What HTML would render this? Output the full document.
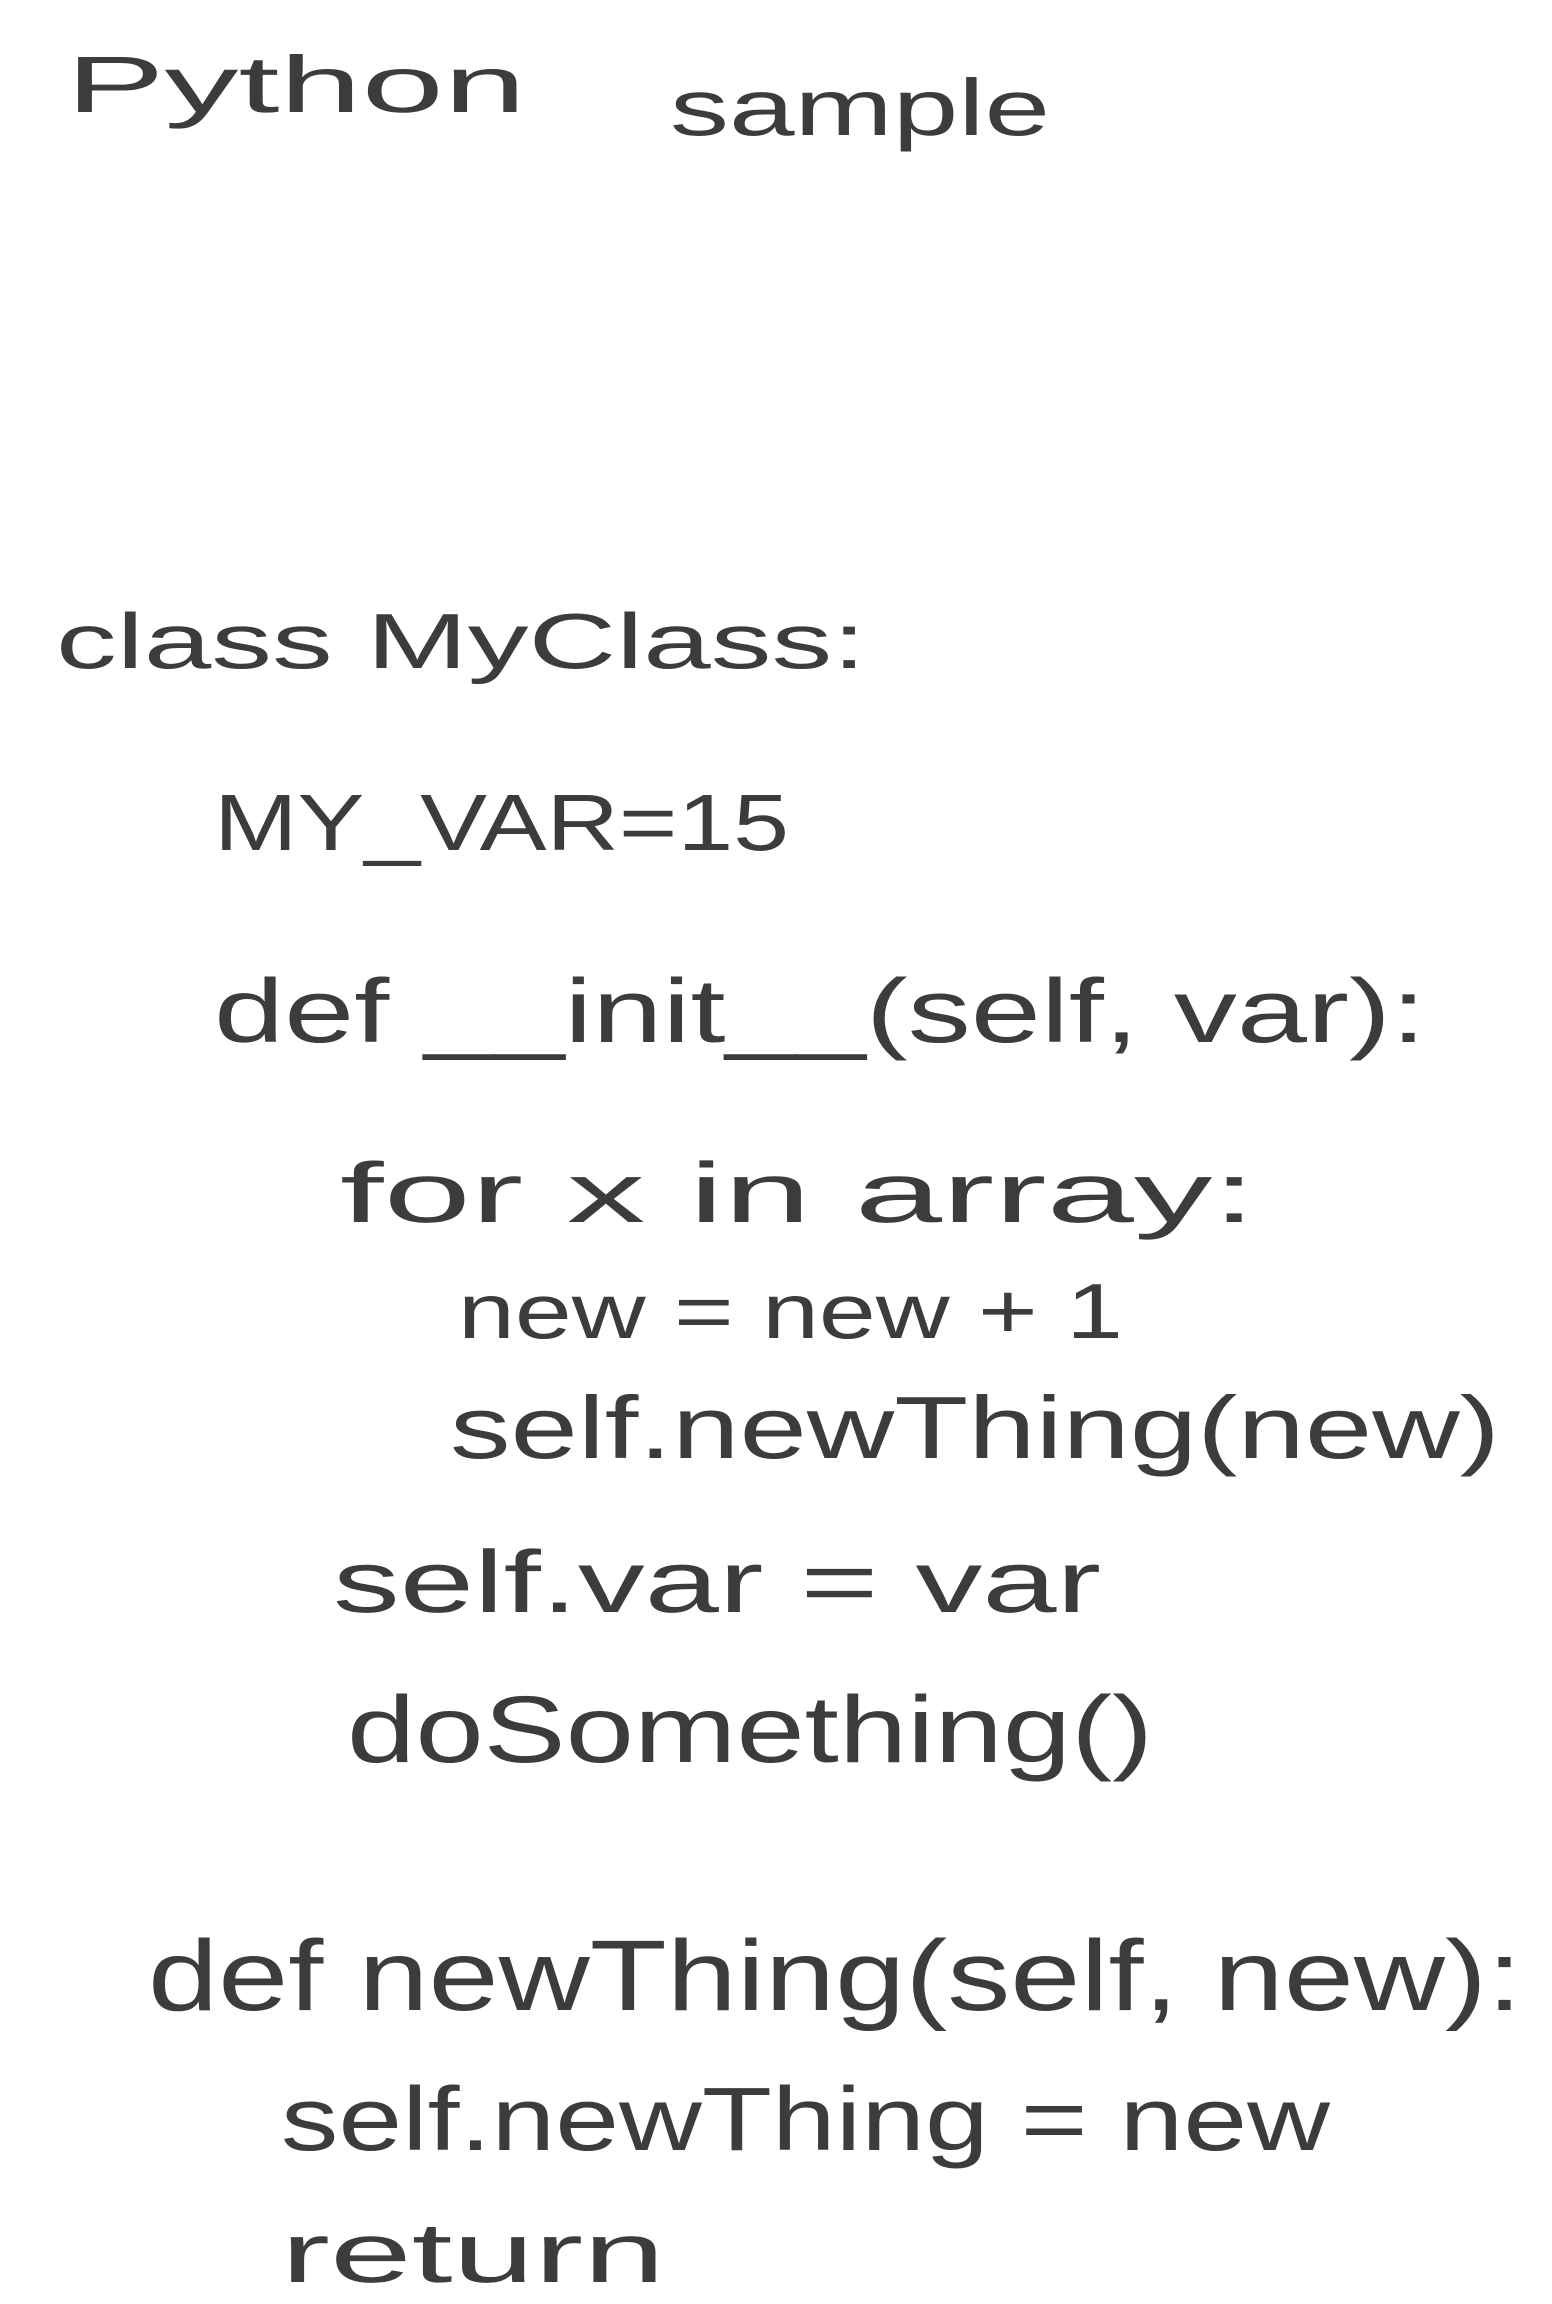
<!DOCTYPE html>
<html><head><meta charset="utf-8"><style>
html,body{margin:0;padding:0;background:#fff;}
svg{display:block;}
text{font-family:"Liberation Sans",sans-serif;fill:#3c3c3c;}
</style></head><body>
<svg width="1552" height="2304" viewBox="0 0 1552 2304" xmlns="http://www.w3.org/2000/svg">
<text x="66" y="112" font-size="80" textLength="460" lengthAdjust="spacingAndGlyphs">Python</text>
<text x="670" y="135" font-size="80" textLength="380" lengthAdjust="spacingAndGlyphs">sample</text>
<text x="56" y="668" font-size="78" textLength="810" lengthAdjust="spacingAndGlyphs">class  MyClass:</text>
<text x="214" y="850" font-size="80" textLength="575" lengthAdjust="spacingAndGlyphs">MY_VAR=15</text>
<text x="214" y="1042" font-size="90" textLength="1212" lengthAdjust="spacingAndGlyphs">def __init__(self, var):</text>
<text x="340" y="1222" font-size="85" textLength="916" lengthAdjust="spacingAndGlyphs">for x in array:</text>
<text x="458" y="1338" font-size="78" textLength="665" lengthAdjust="spacingAndGlyphs">new = new + 1</text>
<text x="450" y="1458" font-size="88" textLength="1050" lengthAdjust="spacingAndGlyphs">self.newThing(new)</text>
<text x="333" y="1612" font-size="88" textLength="768" lengthAdjust="spacingAndGlyphs">self.var = var</text>
<text x="347" y="1762" font-size="95" textLength="806" lengthAdjust="spacingAndGlyphs">doSomething()</text>
<text x="148" y="2010" font-size="100" textLength="1374" lengthAdjust="spacingAndGlyphs">def newThing(self, new):</text>
<text x="281" y="2150" font-size="90" textLength="1049" lengthAdjust="spacingAndGlyphs">self.newThing = new</text>
<text x="281" y="2282" font-size="85" textLength="384" lengthAdjust="spacingAndGlyphs">return</text>
</svg>
</body></html>
